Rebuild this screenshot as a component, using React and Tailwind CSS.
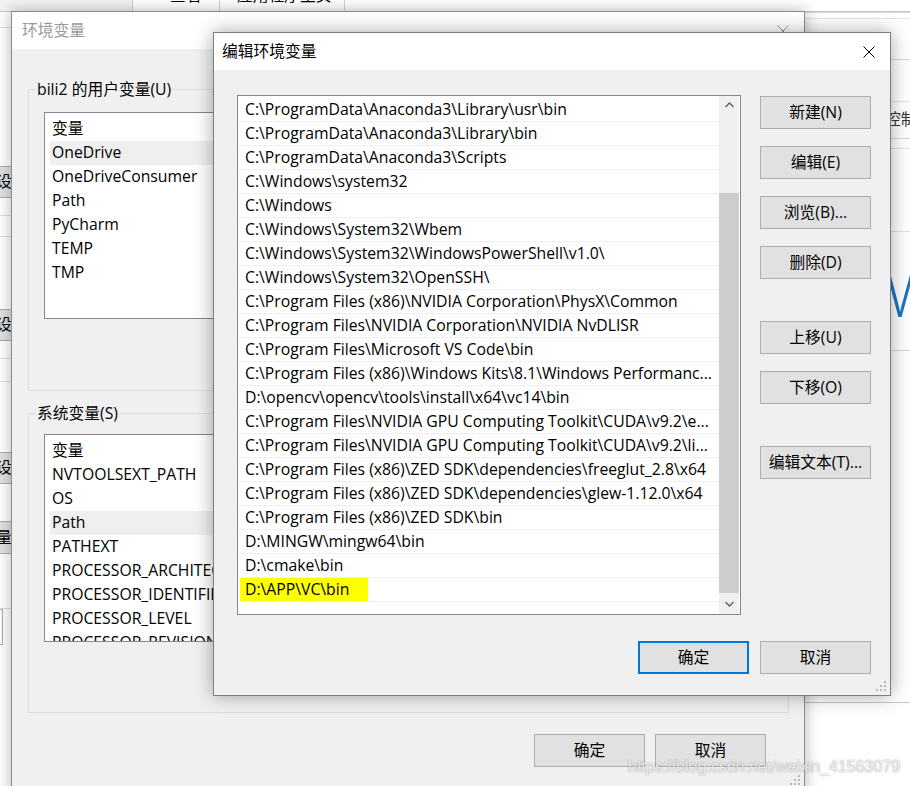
const paths = [
  "C:\\ProgramData\\Anaconda3\\Library\\usr\\bin",
  "C:\\ProgramData\\Anaconda3\\Library\\bin",
  "C:\\ProgramData\\Anaconda3\\Scripts",
  "C:\\Windows\\system32",
  "C:\\Windows",
  "C:\\Windows\\System32\\Wbem",
  "C:\\Windows\\System32\\WindowsPowerShell\\v1.0\\",
  "C:\\Windows\\System32\\OpenSSH\\",
  "C:\\Program Files (x86)\\NVIDIA Corporation\\PhysX\\Common",
  "C:\\Program Files\\NVIDIA Corporation\\NVIDIA NvDLISR",
  "C:\\Program Files\\Microsoft VS Code\\bin",
  "C:\\Program Files (x86)\\Windows Kits\\8.1\\Windows Performanc...",
  "D:\\opencv\\opencv\\tools\\install\\x64\\vc14\\bin",
  "C:\\Program Files\\NVIDIA GPU Computing Toolkit\\CUDA\\v9.2\\e...",
  "C:\\Program Files\\NVIDIA GPU Computing Toolkit\\CUDA\\v9.2\\li...",
  "C:\\Program Files (x86)\\ZED SDK\\dependencies\\freeglut_2.8\\x64",
  "C:\\Program Files (x86)\\ZED SDK\\dependencies\\glew-1.12.0\\x64",
  "C:\\Program Files (x86)\\ZED SDK\\bin",
  "D:\\MINGW\\mingw64\\bin",
  "D:\\cmake\\bin",
  "D:\\APP\\VC\\bin",
];

const userVars = ["OneDrive", "OneDriveConsumer", "Path", "PyCharm", "TEMP", "TMP"];
const sysVars = [
  "NVTOOLSEXT_PATH",
  "OS",
  "Path",
  "PATHEXT",
  "PROCESSOR_ARCHITECTURE",
  "PROCESSOR_IDENTIFIER",
  "PROCESSOR_LEVEL",
  "PROCESSOR_REVISION",
];

const CloseX = ({ color = "#000" }) => (
  <svg width="12" height="12" viewBox="0 0 12 12">
    <path d="M0.5 0.5 L11.5 11.5 M11.5 0.5 L0.5 11.5" stroke={color} strokeWidth="1" fill="none" />
  </svg>
);

const Grip = () => (
  <svg width="12" height="12" viewBox="0 0 12 12">
    {[
      [9, 1],
      [9, 5],
      [5, 5],
      [9, 9],
      [5, 9],
      [1, 9],
    ].map(([x, y]) => (
      <rect key={`${x}-${y}`} x={x} y={y} width="2" height="2" fill="#b9b9b9" />
    ))}
  </svg>
);

const Btn = ({ children, className = "" }) => (
  <div
    className={`w-[111px] h-[33px] flex items-center justify-center bg-[#e1e1e1] border border-[#adadad] ${className}`}
  >
    {children}
  </div>
);

const VarList = ({ items, selected, className = "" }) => (
  <div className={`bg-white border border-[#828790] overflow-hidden pt-[4px] px-[5px] ${className}`}>
    <div className="h-[24px] flex items-center pl-[2px]">变量</div>
    {items.map((name) => (
      <div
        key={name}
        className={`h-[24px] flex items-center pl-[2px] whitespace-nowrap ${
          name === selected ? "bg-[#efefef]" : ""
        }`}
      >
        {name}
      </div>
    ))}
  </div>
);

// stub of a button from the window further back, cut at the left edge
const EdgeBtn = ({ label, h = "h-[32px]" }) => (
  <div className={`${h} bg-[#e1e1e1] border-y border-[#adadad] overflow-hidden flex items-center whitespace-nowrap`}>
    <span className="-ml-[4px]">{label}</span>
  </div>
);

export default function App() {
  return (
    <div className="relative w-[910px] h-[786px] overflow-hidden bg-white text-[15.75px] text-black font-['Open_Sans','Noto_Sans_CJK_SC',sans-serif] leading-none">
      {/* window behind, top strip */}
      <div className="absolute left-0 top-0 w-[910px] h-[12px] border-b border-[#c8c8c8] bg-white flex overflow-hidden">
        <div className="w-[133px] h-full bg-[#f3f3f3] border-r border-[#d0d0d0]" />
        <div className="w-[87px] h-full border-r border-[#d0d0d0] overflow-hidden pl-[37px]">
          <div className="-mt-[12px] whitespace-nowrap">查看</div>
        </div>
        <div className="w-[125px] h-full border-r border-[#d0d0d0] overflow-hidden pl-[17px]">
          <div className="-mt-[12px] whitespace-nowrap">应用程序主页</div>
        </div>
      </div>

      {/* window behind, left strip */}
      <div className="absolute left-0 top-[12px] w-[12px] h-[774px] flex flex-col bg-white">
        <div className="h-[16px] border-b border-[#e0e0e0]" />
        <div className="h-[138px]" />
        <EdgeBtn label="设置" />
        <div className="h-[18px] border-b border-[#e0e0e0]" />
        <div className="h-[21px] border-b border-[#e0e0e0]" />
        <div className="h-[72px]" />
        <EdgeBtn label="设置" />
        <div className="h-[18px] border-b border-[#e0e0e0]" />
        <div className="h-[23px] border-b border-[#e0e0e0]" />
        <div className="h-[70px]" />
        <EdgeBtn label="设置" />
        <div className="h-[37px]" />
        <EdgeBtn label="量" h="h-[33px]" />
        <div className="h-[55px] border-b border-[#e0e0e0]" />
        <div className="h-[36px] border border-l-0 border-[#adadad] bg-white w-[3px]" />
      </div>

      {/* window behind, right side */}
      <div className="absolute left-[805px] top-[12px] w-[105px] h-[774px] bg-white flex flex-col">
        <div className="h-[1px] bg-[#d8d8d8]" />
        <div className="h-[5px]" />
        <div className="h-[1px] bg-[#e4e4e4]" />
        <div className="h-[40px]" />
        <div className="h-[1px] bg-[#d8d8d8]" />
        <div className="h-[41px]" />
        <div className="h-[1px] bg-[#e4e4e4]" />
        <div className="h-[36px] flex items-center pl-[80px] text-[#333] whitespace-nowrap">控制</div>
        <div className="h-[1px] bg-[#d8d8d8]" />
        <div className="h-[9px]" />
        <div className="h-[1px] bg-[#e4e4e4]" />
        <div className="h-[82px]" />
        <div className="h-[1px] bg-[#e0e0e0]" />
        <div className="h-[118px] flex items-center pl-[79px] text-[66px] font-light text-[#1a73c8] font-['Open_Sans',sans-serif]">
          W
        </div>
        <div className="h-[1px] bg-[#d8d8d8]" />
        <div className="h-[351px]" />
        <div className="h-[1px] bg-[#c8c8c8]" />
      </div>

      {/* 环境变量 window */}
      <div className="absolute left-[11px] top-[11px] w-[794px] h-[800px] border border-[#8c8c8c] bg-[#f0f0f0] shadow-[0_0_14px_rgba(0,0,0,0.3)] flex flex-col">
        <div className="h-[37px] bg-white flex items-center justify-between pl-[10px] pr-[15px]">
          <span className="text-[#9a9a9a]">环境变量</span>
          <CloseX color="#9a9a9a" />
        </div>
        <div className="pl-[16px] pr-[15px] flex flex-col">
          <fieldset className="mt-[30px] h-[312px] border border-[#dcdcdc] px-[15px]">
            <legend className="-ml-[8px] px-[1px] h-[20px] leading-[20px]">bili2 的用户变量(U)</legend>
            <VarList items={userVars} selected="OneDrive" className="mt-[13px] h-[207px]" />
          </fieldset>
          <fieldset className="mt-[12px] h-[310px] border border-[#dcdcdc] px-[15px]">
            <legend className="-ml-[8px] px-[1px] h-[20px] leading-[20px]">系统变量(S)</legend>
            <VarList items={sysVars} selected="Path" className="mt-[11px] h-[208px]" />
          </fieldset>
          <div className="flex justify-end gap-[10px] mt-[21px] mr-[23px]">
            <Btn>确定</Btn>
            <Btn>取消</Btn>
          </div>
        </div>
        <div className="absolute left-[777px] top-[762px]">
          <Grip />
        </div>
      </div>

      {/* 编辑环境变量 dialog */}
      <div className="absolute left-[213px] top-[32px] w-[678px] h-[664px] border border-[#7e7e7e] bg-[#f0f0f0] shadow-[0_0_18px_rgba(0,0,0,0.35)] flex flex-col">
        <div className="h-[37px] bg-white flex items-center justify-between pl-[8px] pr-[15px]">
          <span>编辑环境变量</span>
          <CloseX />
        </div>
        <div className="flex pl-[23px] pt-[25px]">
          <div className="w-[504px] h-[520px] bg-white border border-[#828790] flex">
            <div className="w-[481px] pt-[2px]">
              {paths.map((p, i) => (
                <div
                  key={p}
                  className="h-[24px] border-b border-[#f0f0f0] flex items-center whitespace-nowrap overflow-hidden"
                >
                  {i === paths.length - 1 ? (
                    <span className="ml-[2px] h-[24px] w-[128px] pl-[5px] bg-[#ffff00] flex items-center">{p}</span>
                  ) : (
                    <span className="pl-[7px]">{p}</span>
                  )}
                </div>
              ))}
            </div>
            <div className="w-[20px] bg-[#f0f0f0] flex flex-col items-center">
              <div className="h-[17px] flex items-center justify-center">
                <svg width="9" height="6" viewBox="0 0 9 6">
                  <polyline points="0.5,5 4.5,1 8.5,5" stroke="#606060" strokeWidth="1.4" fill="none" />
                </svg>
              </div>
              <div className="w-[20px] h-[400px] mt-[80px] bg-[#cdcdcd]" />
              <div className="flex-1 flex items-center justify-center">
                <svg width="9" height="6" viewBox="0 0 9 6">
                  <polyline points="0.5,1 4.5,5 8.5,1" stroke="#606060" strokeWidth="1.4" fill="none" />
                </svg>
              </div>
            </div>
          </div>
          <div className="ml-[19px] pt-px flex flex-col">
            <Btn>新建(N)</Btn>
            <Btn className="mt-[17px]">编辑(E)</Btn>
            <Btn className="mt-[17px]">浏览(B)...</Btn>
            <Btn className="mt-[17px]">删除(D)</Btn>
            <Btn className="mt-[42px]">上移(U)</Btn>
            <Btn className="mt-[17px]">下移(O)</Btn>
            <Btn className="mt-[42px]">编辑文本(T)...</Btn>
          </div>
        </div>
        <div className="flex justify-end gap-[11px] pr-[19px] mt-[26px]">
          <div className="w-[111px] h-[33px] flex items-center justify-center bg-[#e1e1e1] border-2 border-[#0078d7]">
            确定
          </div>
          <Btn>取消</Btn>
        </div>
        <div className="absolute right-[3px] bottom-[3px]">
          <Grip />
        </div>
      </div>

      {/* watermark */}
      <div className="absolute left-[628px] top-[759px] text-[16px] font-['Liberation_Sans',sans-serif] text-white/80 [text-shadow:0_0_1.5px_rgba(80,80,80,0.7)] whitespace-nowrap">
        https://blog.csdn.net/weixin_41563079
      </div>
    </div>
  );
}
